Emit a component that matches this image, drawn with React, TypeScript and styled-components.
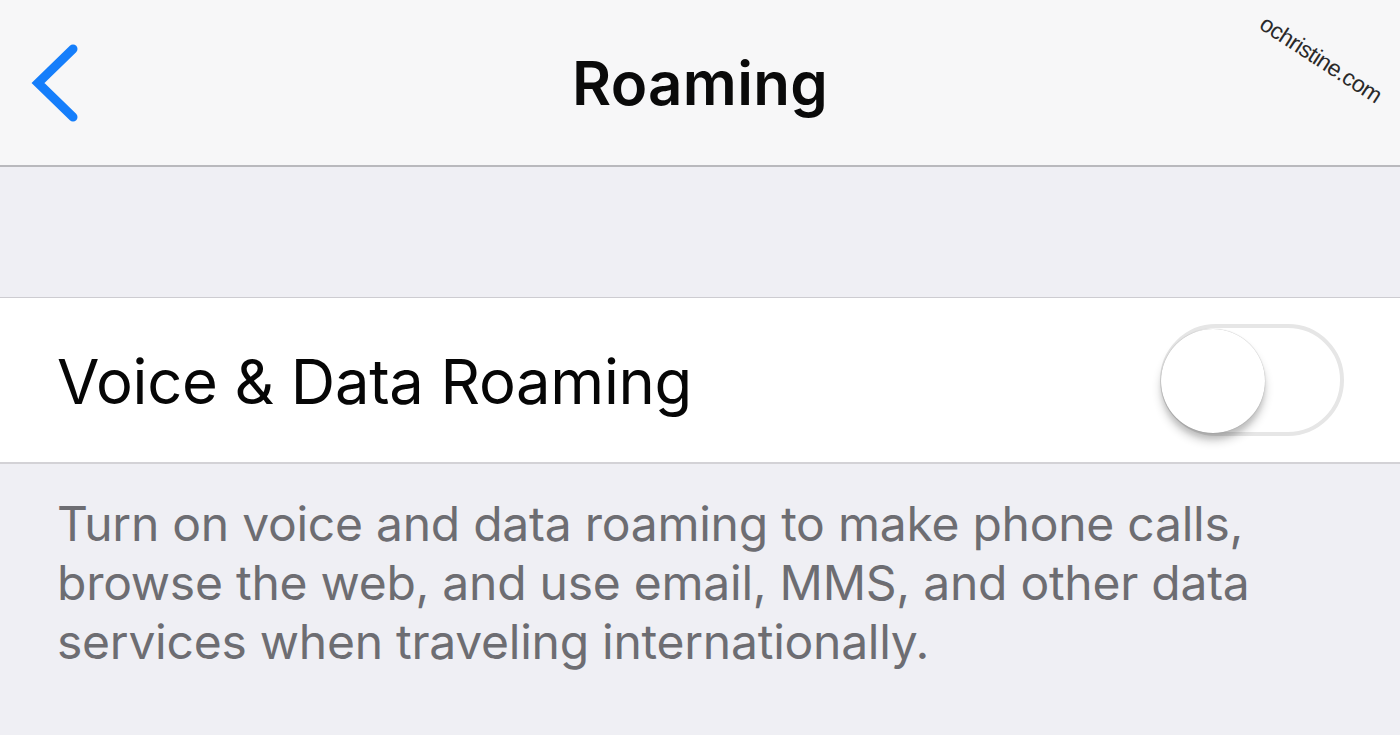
import * as React from 'react';
import styled, { createGlobalStyle } from 'styled-components';

const GlobalStyle = createGlobalStyle`
  html, body {
    margin: 0;
    padding: 0;
    background: #efeff4;
  }
  body {
    font-family: Inter, Roboto, "Liberation Sans", sans-serif;
    overflow: hidden;
  }
`;

const Screen = styled.div`
  position: relative;
  width: 1400px;
  height: 735px;
  display: flex;
  flex-direction: column;
  background: #efeff4;
`;

const NavBar = styled.header`
  height: 165px;
  display: grid;
  grid-template-columns: 200px 1fr 200px;
  align-items: center;
  background: #f7f7f8;
  border-bottom: 2px solid #b9b9bd;
`;

const BackButton = styled.button`
  display: flex;
  align-items: center;
  justify-self: start;
  padding: 0 0 0 30px;
  border: none;
  background: none;
`;

const Title = styled.h1`
  margin: 0;
  text-align: center;
  font-size: 60px;
  font-weight: 600;
  letter-spacing: 0.3px;
  color: #0a0a0a;
`;

const Watermark = styled.span`
  position: absolute;
  top: 8px;
  left: 1262px;
  font-family: "Liberation Sans", sans-serif;
  font-size: 23px;
  color: #2a2a2a;
  transform: rotate(33deg);
  transform-origin: left center;
  letter-spacing: -0.6px;
`;

const Spacer = styled.div`
  height: 130px;
  border-bottom: 1px solid #cdccd1;
`;

const Row = styled.div`
  height: 164px;
  display: flex;
  align-items: center;
  justify-content: space-between;
  padding: 0 56px 0 57px;
  background: #ffffff;
  border-bottom: 2px solid #d3d2d6;
`;

const RowLabel = styled.span`
  font-size: 61.5px;
  font-weight: 400;
  color: #060606;
  letter-spacing: -0.3px;
  margin-top: 2px;
`;

const Track = styled.div<{ $on: boolean }>`
  position: relative;
  width: 184px;
  height: 112px;
  box-sizing: border-box;
  border-radius: 56px;
  border: 4px solid #e6e6e6;
  background: ${({ $on }) => ($on ? '#4cd964' : '#ffffff')};
`;

const Knob = styled.div<{ $on: boolean }>`
  position: absolute;
  top: 1px;
  left: ${({ $on }) => ($on ? '76px' : '-3px')};
  width: 104px;
  height: 104px;
  border-radius: 50%;
  background: #ffffff;
  box-shadow: 0 0 1px rgba(0, 0, 0, 0.35), 0 8px 10px rgba(0, 0, 0, 0.2),
    0 6px 4px rgba(0, 0, 0, 0.08);
`;

const Footer = styled.p`
  margin: 0;
  padding: 30px 40px 0 57px;
  font-size: 48px;
  line-height: 59px;
  color: #6d6d72;
  letter-spacing: -0.25px;
`;

const Chevron: React.FC = () => (
  <svg width="56" height="84" viewBox="0 0 56 84">
    <path
      d="M43 8 L8 42 L43 76"
      fill="none"
      stroke="#157efb"
      strokeWidth="9"
      strokeLinecap="round"
      strokeLinejoin="miter"
    />
  </svg>
);

const Toggle: React.FC<{ on: boolean }> = ({ on }) => (
  <Track $on={on}>
    <Knob $on={on} />
  </Track>
);

const App: React.FC = () => {
  const [roaming, setRoaming] = React.useState(false);

  return (
    <Screen>
      <GlobalStyle />
      <NavBar>
        <BackButton>
          <Chevron />
        </BackButton>
        <Title>Roaming</Title>
        <div />
      </NavBar>
      <Watermark>ochristine.com</Watermark>
      <Spacer />
      <Row onClick={() => setRoaming(!roaming)}>
        <RowLabel>Voice &amp; Data Roaming</RowLabel>
        <Toggle on={roaming} />
      </Row>
      <Footer>
        Turn on voice and data roaming to make phone calls, browse the web, and
        use email, MMS, and other data services when traveling internationally.
      </Footer>
    </Screen>
  );
};

export default App;
